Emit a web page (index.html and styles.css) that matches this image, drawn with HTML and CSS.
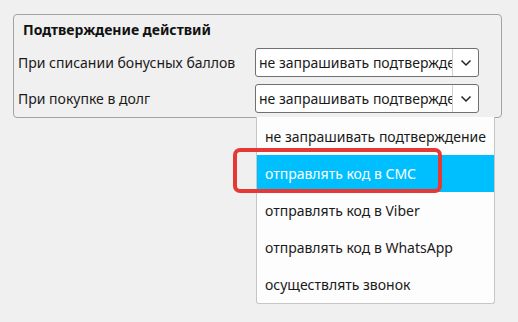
FILE: index.html
```html
<!DOCTYPE html>
<html lang="ru">
<head>
  <meta charset="UTF-8" />
  <title>Подтверждение действий</title>
  <link rel="stylesheet" href="styles.css">
</head>
<body>
  <div class="group-box">
    <div class="group-title">Подтверждение действий</div>
    <div class="rows">
      <div class="row-label">При списании бонусных баллов</div>
      <div class="combo">
        <div class="combo-value">не запрашивать подтверждение</div>
        <div class="combo-arrow">
          <svg width="12" height="8" viewBox="0 0 12 8"><path d="M1.5 1.5 L6 6 L10.5 1.5" fill="none" stroke="#222" stroke-width="1.5"/></svg>
        </div>
      </div>
      <div class="row-label">При покупке в долг</div>
      <div class="combo">
        <div class="combo-value">не запрашивать подтверждение</div>
        <div class="combo-arrow">
          <svg width="12" height="8" viewBox="0 0 12 8"><path d="M1.5 1.5 L6 6 L10.5 1.5" fill="none" stroke="#222" stroke-width="1.5"/></svg>
        </div>
      </div>
    </div>
  </div>

  <!-- раскрытый список второго поля -->
  <ul class="dropdown">
    <li>не запрашивать подтверждение</li>
    <li class="selected">отправлять код в СМС</li>
    <li>отправлять код в Viber</li>
    <li>отправлять код в WhatsApp</li>
    <li>осуществлять звонок</li>
  </ul>
  <div class="highlight-frame"></div>
</body>
</html>
```

FILE: styles.css
```css
body {
  font-family: "Noto Sans", "Open Sans", sans-serif;
  font-size: 14px;
  color: #1a1a1a;
  background: #f0f0f0;
  margin: 0;
  padding: 0;
}
.group-box {
  box-sizing: border-box;
  width: 489px;
  height: 104px;
  margin: 14px 0 0 13px;
  padding: 5px 22px 0 4px;
  border: 1px solid #a3a3a3;
  border-radius: 4px;
}
.group-title {
  height: 20px;
  line-height: 20px;
  padding-left: 5px;
  font-weight: bold;
  color: #111;
  margin-bottom: 8px;
}
.rows {
  display: grid;
  grid-template-columns: 1fr 224px;
  row-gap: 7px;
  align-items: center;
}
.combo {
  box-sizing: border-box;
  height: 29px;
  display: flex;
  background: #fff;
  border: 1px solid #707070;
  border-radius: 3px;
  overflow: hidden;
}
.combo-value {
  flex: 1;
  overflow: hidden;
  white-space: nowrap;
  line-height: 27px;
  padding-left: 3px;
}
.combo-arrow {
  width: 25px;
  border-left: 1px solid #cfcfcf;
  display: flex;
  align-items: center;
  justify-content: center;
}
.dropdown {
  position: absolute;
  left: 256px;
  top: 117px;
  box-sizing: border-box;
  width: 239px;
  margin: 0;
  padding: 1px 0 0 0;
  list-style: none;
  background: #fdfdfd;
  border: 1px solid #c6c6c6;
  border-top: none;
  border-radius: 0 0 3px 3px;
}
.dropdown li {
  height: 37px;
  line-height: 37px;
  padding-left: 8px;
  white-space: nowrap;
}
.dropdown li.selected {
  background: #00bfff;
  color: #fff;
}
.highlight-frame {
  position: absolute;
  left: 233px;
  top: 148px;
  box-sizing: border-box;
  width: 209px;
  height: 45px;
  border: 4px solid #e53935;
  border-radius: 7px;
}
```
